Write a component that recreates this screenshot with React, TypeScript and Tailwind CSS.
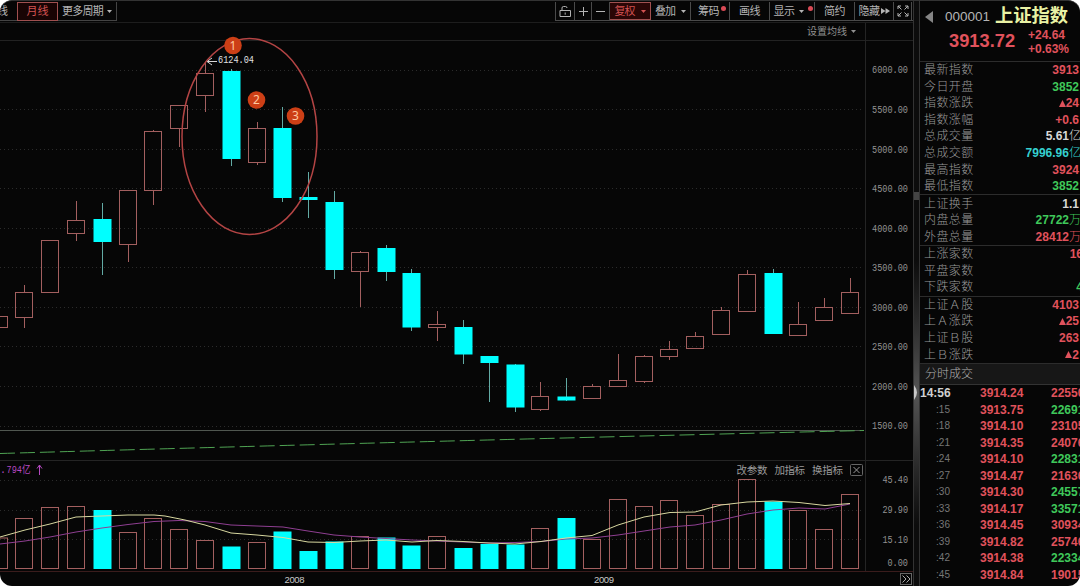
import type { ReactNode } from 'react';

type Candle = {
    up: boolean;
    high: number;
    top: number;
    bottom: number;
    low: number;
    vol: number;
};

const c = (up: boolean, high: number, top: number, bottom: number, low: number, vol: number): Candle => ({
    up, high, top, bottom, low, vol,
});

// Monthly bars, oldest first
const CANDLES: Candle[] = [
    c(true, 316.5, 316.5, 327.5, 327.5, 538),
    c(true, 285, 292.5, 317.5, 328, 518.5),
    c(true, 240, 240.5, 292.5, 292.5, 507.5),
    c(true, 201, 220.5, 233.5, 241, 506.5),
    c(false, 203, 219, 242, 275, 510),
    c(true, 190.5, 190.5, 244.5, 262, 532.5),
    c(true, 130, 131.5, 190.5, 205, 518.5),
    c(true, 105, 105.5, 128.5, 147, 529.5),
    c(true, 62, 73.5, 95.5, 112, 540.5),
    c(false, 69, 71, 159, 166, 546.5),
    c(true, 122, 128.5, 162.5, 165, 542.5),
    c(false, 107, 128, 198, 202, 531.5),
    c(false, 172, 197, 200, 218, 551),
    c(false, 191, 202, 270, 279, 541.5),
    c(true, 251, 252.5, 271.5, 307, 536.5),
    c(false, 245, 248, 272, 281, 537.5),
    c(false, 269, 273, 327.5, 331, 545.5),
    c(true, 311, 324.5, 327.5, 341, 536.5),
    c(false, 320, 327, 354.5, 364, 548),
    c(false, 356, 356, 363, 402, 544),
    c(false, 364, 364.5, 407.5, 412, 544.5),
    c(true, 382, 396.5, 409.5, 411, 528.5),
    c(false, 378, 396.5, 400.5, 401, 518),
    c(true, 384, 386.5, 398.5, 398.5, 539.5),
    c(true, 354, 380.5, 386.5, 387, 499.5),
    c(true, 355, 356.5, 381.5, 383, 506.5),
    c(true, 341, 349.5, 356.5, 360, 500.5),
    c(true, 332, 336.5, 348.5, 348.5, 515.5),
    c(true, 307, 310.5, 334.5, 334.5, 504.5),
    c(true, 270, 274.5, 311.5, 311.5, 479.5),
    c(false, 269, 273, 334, 334, 501.5),
    c(true, 302, 324.5, 335.5, 335.5, 510.5),
    c(true, 298, 307.5, 320.5, 320.5, 529.5),
    c(true, 278, 292.5, 313.5, 313.5, 494.5),
];

const PRICE_AXIS: [string, number][] = [
    ['6000.00', 70], ['5500.00', 109.5], ['5000.00', 149.5], ['4500.00', 188.5], ['4000.00', 228.5],
    ['3500.00', 267.5], ['3000.00', 307.5], ['2500.00', 346.5], ['2000.00', 386.5], ['1500.00', 426],
];

const VOLUME_AXIS: [string, number, number][] = [
    ['45.40', 480, 25.5], ['29.90', 510, 25.5], ['15.10', 539.5, 25.5], ['0.00', 563, 20.5],
];

const MA_SHORT = '0,537 25,530 50,524 76,517 102,516 128,515 154,515 165,516 185,520 205,525 231,533 257,535 283,537.5 308,542 334,542.5 360,541 386,540 412,542 437,540.5 463,541.5 489,543 515,544 541,541.5 566,538 592,535.5 618,525 644,517 670,512.5 695,512 721,505 747,502 773,501 799,502.5 825,505.5 850,503.5';
const MA_LONG = '0,544 25,541 50,537 76,532 102,528 128,524.5 154,521.5 179,520.5 205,521.5 231,525 257,526 283,527 308,531 334,535 360,537 386,538.5 412,540 437,541 463,542 489,543 515,542.5 541,541.5 566,539 592,538 618,535 644,531 670,527 695,525 721,520 747,514 773,510 799,508 825,509 850,504';

const MARKERS: [string, number, number][] = [['1', 233, 45.5], ['2', 256.5, 100], ['3', 295.5, 116]];

const RED = 'text-[#e0525c]';
const GREEN = 'text-[#3fc85a]';
const WHITE = 'text-[#d8d8d8]';
const CYAN = 'text-[#35d0d0]';

type Quote = { label: string; value: string; color: string; unit?: string; shift?: string };

const QUOTE_GROUPS: Quote[][] = [
    [
        { label: '最新指数', value: '3913', color: RED },
        { label: '今日开盘', value: '3852', color: GREEN },
        { label: '指数涨跌', value: '▲24', color: RED },
        { label: '指数涨幅', value: '+0.6', color: RED },
        { label: '总成交量', value: '5.61', unit: '亿', color: WHITE, shift: '-mr-px' },
        { label: '总成交额', value: '7996.96', unit: '亿', color: CYAN, shift: '-mr-px' },
        { label: '最高指数', value: '3924', color: RED },
        { label: '最低指数', value: '3852', color: GREEN },
    ],
    [
        { label: '上证换手', value: '1.1', color: WHITE },
        { label: '内盘总量', value: '27722', unit: '万', color: GREEN, shift: '-mr-px' },
        { label: '外盘总量', value: '28412', unit: '万', color: RED, shift: '-mr-px' },
    ],
    [
        { label: '上涨家数', value: '16', color: RED, shift: '-mr-[3px]' },
        { label: '平盘家数', value: '', color: WHITE },
        { label: '下跌家数', value: '4', color: GREEN, shift: '-mr-[3px]' },
    ],
    [
        { label: '上证Ａ股', value: '4103', color: RED },
        { label: '上Ａ涨跌', value: '▲25', color: RED },
        { label: '上证Ｂ股', value: '263', color: RED },
        { label: '上Ｂ涨跌', value: '▲2', color: RED },
    ],
];

const TRADES: [string, string, string, string][] = [
    ['14:56', '3914.24', '22550', RED],
    [':15', '3913.75', '22691', GREEN],
    [':18', '3914.10', '23105', RED],
    [':21', '3914.35', '24076', RED],
    [':24', '3914.10', '22831', GREEN],
    [':27', '3914.47', '21636', RED],
    [':30', '3914.30', '24557', GREEN],
    [':33', '3914.17', '33571', GREEN],
    [':36', '3914.45', '30934', RED],
    [':39', '3914.82', '25746', RED],
    [':42', '3914.38', '22334', GREEN],
    [':45', '3914.84', '19015', RED],
];

const Caret = () => (
    <svg width="5" height="3" viewBox="0 0 5 3" className="shrink-0">
        <path d="M0 0h5L2.5 3z" fill="currentColor" />
    </svg>
);

const Dot = () => <span className="mb-1.5 size-[5px] shrink-0 rounded-full bg-[#d94a55]" />;

const Tool = ({ className, children }: { className: string; children?: ReactNode }) => (
    <button className={`flex h-full shrink-0 items-center justify-center border-r border-[#4a4a4a] ${className}`}>
        {children}
    </button>
);

const Toolbar = () => (
    <div className="flex h-[23px] items-start border-b border-[#1d1d1d] pt-0.5 text-[11px] leading-none text-[#b4b4b4]">
        <div className="flex h-[19px] w-[117px] border-b border-[#444]">
            <button className="-ml-[3px] w-[20px] shrink-0 text-left">线</button>
            <button className="h-[19px] w-[41px] shrink-0 border border-[#a05050] bg-[#180404] text-[#d25252]">月线</button>
            <button className="flex w-[59px] shrink-0 items-center justify-center gap-1 border-r border-[#444] text-[11px] tracking-[-0.8px]">
                更多周期 <Caret />
            </button>
        </div>
        <div className="ml-auto flex h-[19px] border-b border-l border-[#4a4a4a]">
            <Tool className="w-[19px]">
                <svg width="13" height="13" viewBox="0 0 13 13" fill="none" stroke="currentColor">
                    <path d="M1 5.500h10.500v6H1zM3 5.500V3q0-1.500 1.500-1.500h2q1.500 0 1.500 1.500M6.200 7.500v2.200" />
                </svg>
            </Tool>
            <Tool className="w-[17px]">
                <svg width="9" height="9" viewBox="0 0 9 9" stroke="currentColor"><path d="M0 4.500h9M4.500 0v9" /></svg>
            </Tool>
            <Tool className="w-[18px]">
                <svg width="9" height="9" viewBox="0 0 9 9" stroke="currentColor"><path d="M0 4.500h9" /></svg>
            </Tool>
            <Tool className="w-[41px] gap-1.5 border border-l-0 border-[#a05050]! bg-[#2a0606] text-[#d25252] tracking-[-1px]">复权 <Caret /></Tool>
            <Tool className="w-[40px] gap-1.5 tracking-[-1px]">叠加 <Caret /></Tool>
            <Tool className="w-[39px] gap-0.5 pl-1 tracking-[-0.5px]">筹码<Dot /></Tool>
            <Tool className="w-[40px] tracking-[-0.5px]">画线</Tool>
            <Tool className="w-[45px] gap-1 pl-0.5 tracking-[-0.5px]">显示 <Caret /><Dot /></Tool>
            <Tool className="w-[40px] tracking-[-0.5px]">简约</Tool>
            <Tool className="w-[39px] gap-px tracking-[-0.5px]">
                隐藏
                <svg width="9" height="6" viewBox="0 0 9 6"><path d="M0 0l4.500 3L0 6zM4.500 0L9 3L4.500 6z" fill="currentColor" /></svg>
            </Tool>
            <Tool className="mr-px w-[18px]">
                <svg width="12" height="12" viewBox="0 0 12 12" fill="none" stroke="currentColor">
                    <path d="M1 4V1h3M8 1h3v3M11 8v3H8M4 11H1V8M1 1l3.500 3.500M11 1L7.500 4.500M11 11L7.500 7.500M1 11l3.500-3.500" />
                </svg>
            </Tool>
        </div>
    </div>
);

const Bar = ({ candle, index }: { candle: Candle; index: number }) => {
    const { up, high, top, bottom, low, vol } = candle;
    const x = Math.round(-1.4 + index * 25.8) + 0.5;
    if (!up) {
        return (
            <g>
                <path d={`M${x} ${high}V${low}`} stroke="#62aaa4" />
                <rect x={x - 9} y={top} width="18" height={bottom - top} fill="#00ffff" />
                <rect x={x - 9} y={vol} width="18" height={569 - vol} fill="#00ffff" />
            </g>
        );
    }
    return (
        <g fill="none" stroke="#a35f5f">
            <path d={`M${x} ${high}V${top}M${x} ${bottom}V${low}`} />
            <rect x={x - 9} y={top} width="17" height={bottom - top} />
            <rect x={x - 9} y={vol} width="17" height={568.5 - vol} />
        </g>
    );
};

const Chart = () => (
    <svg
        width="913"
        height="545"
        viewBox="0 41 913 545"
        className="block overflow-visible font-['Liberation_Mono','Noto_Sans_CJK_SC',monospace]"
    >
        {/* grid and pane borders */}
        <g stroke="#2b2b2b" strokeDasharray="1 3">
            {PRICE_AXIS.map(([label, y]) => <path key={label} d={`M0 ${Math.floor(y) + 0.5}H864`} />)}
            {VOLUME_AXIS.slice(0, 3).map(([label, y]) => <path key={label} d={`M0 ${Math.floor(y) + 0.5}H864`} />)}
        </g>
        <g stroke="#242424">
            <path d="M865.500 23V571M0 460.500H913" />
            <path d="M0 571.500H913" stroke="#3a1c1c" />
            <path d="M0 430.500H864" stroke="#505750" />
        </g>

        {CANDLES.map((candle, i) => <Bar key={i} candle={candle} index={i} />)}

        {/* moving averages */}
        <path d="M0 453.500Q430 441 864 430.500" fill="none" stroke="#4fa353" strokeDasharray="15 5" />
        <polyline points={MA_LONG} fill="none" stroke="#8f3f92" />
        <polyline points={MA_SHORT} fill="none" stroke="#d8d8a0" />

        {/* axis labels */}
        <g fontSize="10.5" fill="#929292">
            {PRICE_AXIS.map(([label, y]) => (
                <text key={label} x="872" y={y + 3} textLength="36" lengthAdjust="spacingAndGlyphs">{label}</text>
            ))}
            {VOLUME_AXIS.map(([label, y, width]) => (
                <text key={label} x={908 - width} y={y + 3} textLength={width} lengthAdjust="spacingAndGlyphs">{label}</text>
            ))}
        </g>
        <g className="font-['Liberation_Sans',sans-serif]" fontSize="9.5" fill="#c8c8c8">
            <text x="284.500" y="583" textLength="20">2008</text>
            <text x="594" y="583" textLength="20">2009</text>
        </g>

        {/* peak annotation */}
        <path d="M217 61.500H207.500M212 58l-5 3.500l5 3.500" fill="none" stroke="#d8d8d8" />
        <text x="218" y="63" fontSize="10.500" fill="#e2e2e2" textLength="36" lengthAdjust="spacingAndGlyphs">6124.04</text>
        <ellipse cx="249.500" cy="136.500" rx="67.500" ry="98" fill="none" stroke="#b34444" strokeWidth="1.5" />
        {MARKERS.map(([n, x, y]) => (
            <g key={n}>
                <circle cx={x} cy={y} r="8.800" fill="#cc3f16" />
                <text x={x} y={y + 4.2} textAnchor="middle" fontSize="12" fill="#ffc9a0" className="font-['Noto_Sans',sans-serif]">{n}</text>
            </g>
        ))}

        {/* volume pane header */}
        <g fill="#b548c0" fontSize="10">
            <text x="0" y="473">.</text>
            <text x="6.500" y="473" textLength="24" lengthAdjust="spacingAndGlyphs">794亿</text>
            <path d="M39.500 475V465M37 468.500l2.500-3.500l2.500 3.500" fill="none" stroke="#b548c0" />
        </g>
        <g fontSize="10.500" fill="#9a9a9a">
            <text x="736.500" y="473.500" textLength="31">改参数</text>
            <text x="774.500" y="473.500" textLength="30.500">加指标</text>
            <text x="812" y="473.500" textLength="31">换指标</text>
        </g>
        <g fill="none" stroke="#666">
            <rect x="850.500" y="464.500" width="12" height="11" rx="1" />
            <path d="M853.500 467l6 6M859.500 467l-6 6" stroke="#999" />
            <rect x="900.500" y="573.500" width="11" height="11" />
            <path d="M902.500 575.500l3.500 3.500l-3.500 3.500M906.500 575.500l3.500 3.500l-3.500 3.500" stroke="#aaa" />
        </g>
    </svg>
);

const Splitter = () => (
    <div className="flex w-[7px] shrink-0 flex-col border-x border-[#333] bg-[#0c0c0c]">
        <div className="h-[191px]" />
        <div className="h-[8px] bg-[#444]" />
        <div className="h-[60px]" />
        <div className="flex h-[265px] items-center bg-linear-to-b from-[#0c0c0c] via-[#555] to-[#0c0c0c]">
            <svg width="4" height="15" viewBox="0 0 4 15"><path d="M0 0q3 4 3 7.500T0 15z" fill="#c8c8c8" /></svg>
        </div>
    </div>
);

const Sidebar = () => (
    <aside className="flex w-[160px] shrink-0 flex-col overflow-hidden whitespace-nowrap">
        <header className="flex h-[61px] flex-col border-b border-[#2c2c2c]">
            <div className="flex h-[29px] items-center pt-0.5 pl-[5px] leading-none">
                <svg width="8" height="12" viewBox="0 0 8 12"><path d="M8 0v12L0 6z" fill="#858585" /></svg>
                <span className="ml-3 w-[50px] text-[13.5px] text-[#b5b5b5]">000001</span>
                <h1 className="text-[18.3px] font-bold text-[#e9f2a4]">上证指数</h1>
            </div>
            <div className="flex pl-[29px] font-bold text-[#e0525c]">
                <span className="w-[79px] pt-px text-[18.3px] leading-[20px]">3913.72</span>
                <span className="-mt-0.5 flex flex-col text-[12px] leading-[14px]">
                    <span>+24.64</span>
                    <span>+0.63%</span>
                </span>
            </div>
        </header>

        {QUOTE_GROUPS.map((group, i) => (
            <section key={i} className="border-b border-[#2c2c2c]">
                {group.map((q) => (
                    <div key={q.label} className="flex h-[16.55px] items-center pl-1 text-[12px] leading-none">
                        <span className="font-light tracking-[0.4px] text-[#9a9a9a]">{q.label}</span>
                        <span className={`ml-auto flex items-center font-bold ${q.color} ${q.shift ?? 'mr-px'}`}>
                            {q.value.startsWith('▲') && (
                                <svg width="7" height="7" viewBox="0 0 7 7"><path d="M3.500 0L7 7H0z" fill="currentColor" /></svg>
                            )}
                            {q.value.replace('▲', '')}
                            {q.unit && <span className="font-light">{q.unit}</span>}
                        </span>
                    </div>
                ))}
            </section>
        ))}

        <h2 className="flex h-[21px] shrink-0 items-center border-b border-[#333] bg-[#171717] pl-[5px] text-[12px] font-light text-[#b0b0b0]">
            分时成交
        </h2>
        <div>
            {TRADES.map(([time, price, volume, color], i) => (
                <div key={time} className="flex h-[16.5px] items-center text-[12px] leading-none font-bold">
                    <span className={i === 0 ? 'w-[30px] shrink-0 text-right text-[#d0d0d0]' : 'w-[30px] shrink-0 text-right text-[10px] font-normal text-[#777]'}>
                        {time}
                    </span>
                    <span className={`ml-[30px] w-[71px] shrink-0 ${RED}`}>{price}</span>
                    <span className={color}>{volume}</span>
                </div>
            ))}
        </div>
    </aside>
);

const App = () => (
    <div className="h-[586px] w-[1080px] bg-white font-['Liberation_Sans','Noto_Sans_CJK_SC',sans-serif]">
        <main className="flex h-full overflow-hidden rounded-xl border-t border-[#333] bg-[#060606]">
            <div className="-mt-px flex w-[913px] shrink-0 flex-col">
                <Toolbar />
                <div className="flex h-[18px] items-center justify-end gap-1 border-b border-[#222] pr-[57px] text-[10px] text-[#909090]">
                    设置均线 <Caret />
                </div>
                <Chart />
            </div>
            <Splitter />
            <Sidebar />
        </main>
    </div>
);

export default App;
